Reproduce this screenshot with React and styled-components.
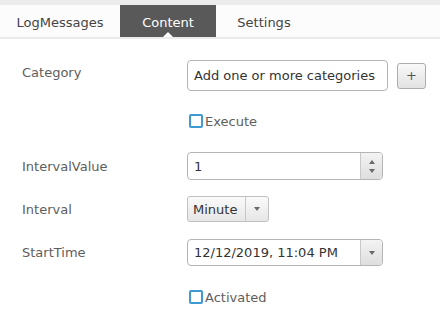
import React from "react";
import styled, { createGlobalStyle } from "styled-components";

const Global = createGlobalStyle`
  html, body { margin: 0; padding: 0; background: #fff; }
  body { font-family: "DejaVu Sans", Verdana, sans-serif; }
`;

const Page = styled.div`
  width: 440px;
  height: 318px;
  background: #fff;
  overflow: hidden;
`;

const TopStrip = styled.div`
  height: 5px;
  background: #ececec;
`;

const TabBar = styled.div`
  display: flex;
  height: 32px;
  background: #fcfcfc;
  border-bottom: 2px solid #ebebeb;
`;

const Tab = styled.div`
  position: relative;
  display: flex;
  align-items: center;
  justify-content: center;
  width: ${(p) => p.$w}px;
  font-size: 13px;
  color: ${(p) => (p.$active ? "#fff" : "#444")};
  background: ${(p) => (p.$active ? "#595959" : "transparent")};
  padding-top: 3px;
  box-sizing: border-box;
  &::after {
    content: "";
    display: ${(p) => (p.$active ? "block" : "none")};
    position: absolute;
    bottom: 0;
    left: 50%;
    margin-left: -5px;
    border-left: 5px solid transparent;
    border-right: 5px solid transparent;
    border-bottom: 5px solid #fff;
  }
`;

const Form = styled.div`
  display: flex;
  flex-direction: column;
  padding: 21px 0 0 22px;
`;

const Row = styled.div`
  display: flex;
  align-items: ${(p) => p.$align || "center"};
  height: ${(p) => p.$h}px;
  margin-top: ${(p) => p.$mt || 0}px;
`;

const Label = styled.div`
  width: 165px;
  flex: none;
  font-size: 13px;
  color: #5e5e5e;
  padding-top: ${(p) => p.$pt || 0}px;
`;

const Control = styled.div`
  display: flex;
  align-items: center;
  gap: 9px;
`;

const TextBox = styled.div`
  box-sizing: border-box;
  width: ${(p) => p.$w}px;
  height: ${(p) => p.$h}px;
  border: 1px solid #b4b4b4;
  border-radius: 4px;
  background: #fff;
  display: flex;
  align-items: stretch;
  overflow: hidden;
  font-size: 13px;
  color: #333;
`;

const TextValue = styled.div`
  flex: 1;
  display: flex;
  align-items: center;
  padding-left: 6px;
  white-space: nowrap;
`;

const SideBtn = styled.div`
  width: 22px;
  flex: none;
  border-left: 1px solid #c8c8c8;
  background: linear-gradient(#f3f3f3, #dedede);
  display: flex;
  flex-direction: column;
  align-items: center;
  justify-content: ${(p) => (p.$spin ? "space-around" : "center")};
  padding: ${(p) => (p.$spin ? "4px 0" : "0")};
  box-sizing: border-box;
`;

const Arrow = styled.div`
  width: 0;
  height: 0;
  border-left: 3px solid transparent;
  border-right: 3px solid transparent;
  ${(p) =>
    p.$up ? "border-bottom: 4px solid #6a6a6a;" : "border-top: 4px solid #6a6a6a;"}
`;

const PlusButton = styled.div`
  box-sizing: border-box;
  width: 29px;
  height: 26px;
  border: 1px solid #acacac;
  border-radius: 3px;
  background: linear-gradient(#f9f9f9, #e2e2e2);
  display: flex;
  align-items: center;
  justify-content: center;
  color: #555;
  font-size: 13px;
`;

const Dropdown = styled.div`
  box-sizing: border-box;
  width: 82px;
  height: 26px;
  border: 1px solid #c0c0c0;
  border-radius: 3px;
  background: linear-gradient(#fafafa, #e6e6e6);
  display: flex;
  align-items: stretch;
  font-size: 13px;
  color: #333;
  overflow: hidden;
`;

const DropText = styled.div`
  flex: 1;
  display: flex;
  align-items: center;
  padding-left: 5px;
`;

const DropArrow = styled.div`
  width: 22px;
  border-left: 1px solid #c8c8c8;
  display: flex;
  align-items: center;
  justify-content: center;
`;

const CheckWrap = styled.label`
  display: flex;
  align-items: center;
  gap: 2px;
  margin-left: 2px;
  font-size: 13px;
  color: #5e5e5e;
`;

const Box = styled.span`
  box-sizing: border-box;
  width: 14px;
  height: 14px;
  border: 2px solid #3f9ad2;
  border-radius: 2px;
  background: #fff;
`;

const Spacer = styled.div`
  width: 165px;
  flex: none;
`;

export default function App() {
  return (
    <Page>
      <Global />
      <TopStrip />
      <TabBar>
        <Tab $w={120}>LogMessages</Tab>
        <Tab $w={96} $active>Content</Tab>
        <Tab $w={96}>Settings</Tab>
      </TabBar>
      <Form>
        <Row $h={31} $align="flex-start">
          <Label $pt={5}>Category</Label>
          <Control>
            <TextBox $w={201} $h={31}>
              <TextValue>Add one or more categories</TextValue>
            </TextBox>
            <PlusButton>+</PlusButton>
          </Control>
        </Row>
        <Row $h={16} $mt={22}>
          <Spacer />
          <CheckWrap>
            <Box />
            Execute
          </CheckWrap>
        </Row>
        <Row $h={28} $mt={23}>
          <Label>IntervalValue</Label>
          <TextBox $w={196} $h={28}>
            <TextValue>1</TextValue>
            <SideBtn $spin>
              <Arrow $up />
              <Arrow />
            </SideBtn>
          </TextBox>
        </Row>
        <Row $h={26} $mt={16}>
          <Label>Interval</Label>
          <Dropdown>
            <DropText>Minute</DropText>
            <DropArrow>
              <Arrow />
            </DropArrow>
          </Dropdown>
        </Row>
        <Row $h={27} $mt={17}>
          <Label>StartTime</Label>
          <TextBox $w={196} $h={27}>
            <TextValue>12/12/2019, 11:04 PM</TextValue>
            <SideBtn>
              <Arrow />
            </SideBtn>
          </TextBox>
        </Row>
        <Row $h={16} $mt={23}>
          <Spacer />
          <CheckWrap>
            <Box />
            Activated
          </CheckWrap>
        </Row>
      </Form>
    </Page>
  );
}
